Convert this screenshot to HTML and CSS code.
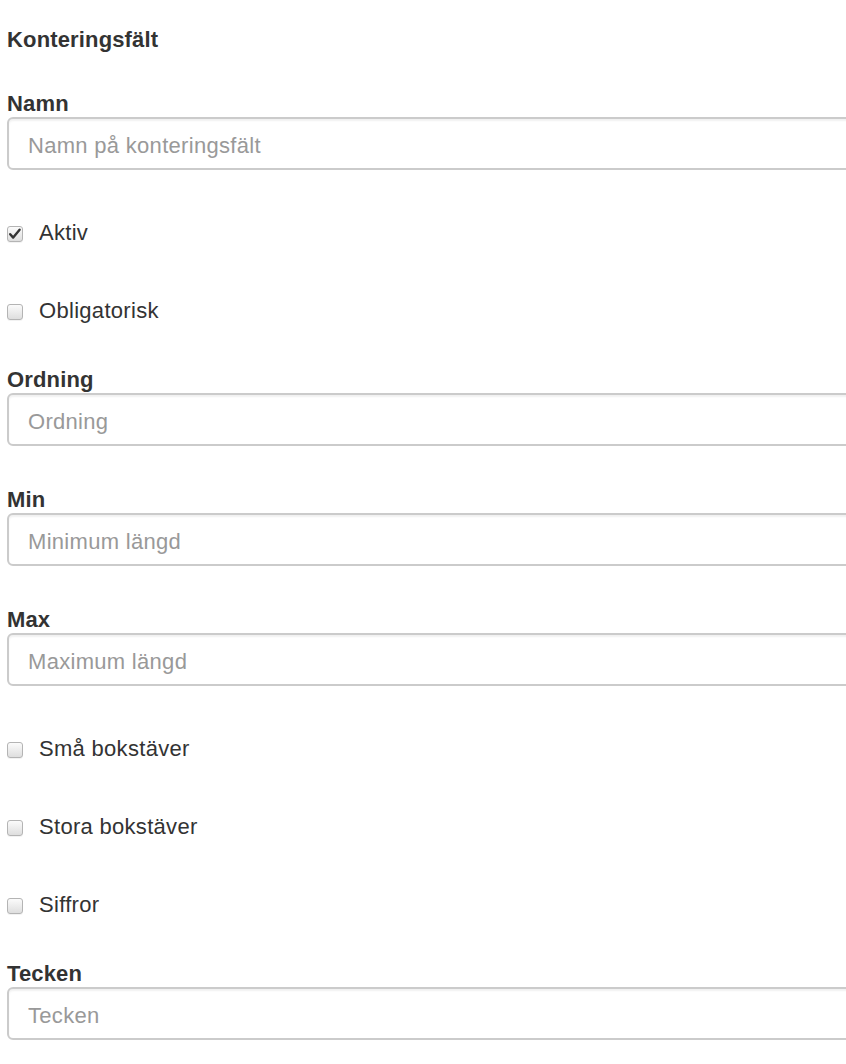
FILE: index.html
```html
<!DOCTYPE html>
<html lang="sv">
<head>
<meta charset="utf-8">
<title>Konteringsfält</title>
<link rel="stylesheet" href="styles.css">
</head>
<body>
<form class="form">
  <div class="heading">Konteringsfält</div>

  <div class="field">
    <label class="label" for="namn">Namn</label>
    <input class="input" id="namn" type="text" placeholder="Namn på konteringsfält">
  </div>

  <label class="check">
    <span class="box"><svg viewBox="0 0 16 16" width="16" height="16"><path d="M3.2 8.2 L6.2 11.6 L12.6 3.8" fill="none" stroke="#333" stroke-width="2.4" stroke-linecap="round" stroke-linejoin="round"/></svg></span>
    <span class="check-text">Aktiv</span>
  </label>

  <label class="check">
    <span class="box"></span>
    <span class="check-text">Obligatorisk</span>
  </label>

  <div class="field">
    <label class="label" for="ordning">Ordning</label>
    <input class="input" id="ordning" type="text" placeholder="Ordning">
  </div>

  <div class="field">
    <label class="label" for="min">Min</label>
    <input class="input" id="min" type="text" placeholder="Minimum längd">
  </div>

  <div class="field">
    <label class="label" for="max">Max</label>
    <input class="input" id="max" type="text" placeholder="Maximum längd">
  </div>

  <label class="check">
    <span class="box"></span>
    <span class="check-text">Små bokstäver</span>
  </label>

  <label class="check">
    <span class="box"></span>
    <span class="check-text">Stora bokstäver</span>
  </label>

  <label class="check">
    <span class="box"></span>
    <span class="check-text">Siffror</span>
  </label>

  <div class="field">
    <label class="label" for="tecken">Tecken</label>
    <input class="input" id="tecken" type="text" placeholder="Tecken">
  </div>
</form>
</body>
</html>
```

FILE: styles.css
```css
html, body {
  margin: 0;
  padding: 0;
  background: #fff;
  overflow: hidden;
}

body {
  font-family: "Liberation Sans", Arial, Helvetica, sans-serif;
  font-size: 22px;
  line-height: 26px;
  color: #333;
}

.form {
  display: flex;
  flex-direction: column;
  width: 900px;
  padding: 27px 0 0 7px;
}

.heading {
  font-weight: bold;
  letter-spacing: 0.15px;
  margin-bottom: 35px;
}

.field {
  display: flex;
  flex-direction: column;
}

.label {
  font-weight: bold;
  letter-spacing: 0.15px;
  padding-top: 3px;
  height: 26px;
}

.input {
  box-sizing: border-box;
  height: 53px;
  width: 100%;
  padding: 4px 19px 0;
  border: 2px solid #cbcbcb;
  border-radius: 6px;
  box-shadow: inset 0 2px 2px rgba(0, 0, 0, 0.06);
  font-family: inherit;
  font-size: 22px;
  letter-spacing: 0.3px;
  color: #555;
  background: #fff;
  outline: none;
}

.input::placeholder {
  color: #999;
}

.check {
  display: flex;
  align-items: flex-start;
  height: 26px;
}

.check-text {
  padding-top: 4px;
  letter-spacing: 0.3px;
}

.box {
  box-sizing: border-box;
  width: 16px;
  height: 16px;
  margin-top: 10px;
  margin-right: 16px;
  border: 1px solid #b4b4b4;
  border-radius: 3px;
  background: linear-gradient(#fbfbfb, #dedede);
  box-shadow: 0 1px 0 rgba(0, 0, 0, 0.05);
  position: relative;
  flex: none;
}

.box svg {
  position: absolute;
  left: -1px;
  top: -1px;
}

.field + .field { margin-top: 38px; }
.field + .check { margin-top: 46px; }
.check + .check { margin-top: 52px; }
.check + .field { margin-top: 44px; }
```
